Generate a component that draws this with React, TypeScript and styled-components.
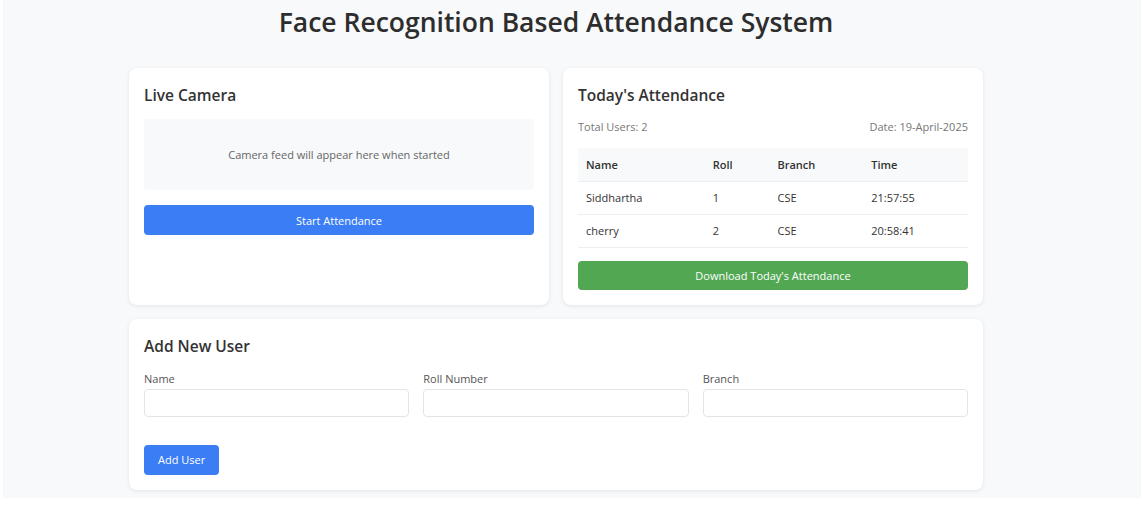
import React from "react";
import styled, { createGlobalStyle } from "styled-components";

const GlobalStyle = createGlobalStyle`
  html, body { margin: 0; padding: 0; background: #ffffff; }
  body { font-family: "Open Sans", "Noto Sans", sans-serif; color: #333; }
  * { box-sizing: border-box; }
`;

const Page = styled.div`
  margin-left: 3px;
  width: 1138px;
  height: 498px;
  background: #f8f9fa;
  overflow: hidden;
`;

const Main = styled.div`
  width: 1106px;
`;

const Title = styled.h1`
  margin: 0 0 24px;
  height: 44px;
  line-height: 44px;
  text-align: center;
  font-size: 26.5px;
  font-weight: 600;
  color: #2d2d2d;
`;

const Container = styled.div`
  width: 854px;
  margin: 0 auto;
  display: flex;
  flex-direction: column;
  gap: 14px;
`;

const Row = styled.div`
  display: grid;
  grid-template-columns: 1fr 1fr;
  gap: 14px;
`;

const Card = styled.section`
  background: #fff;
  border-radius: 8px;
  box-shadow: 0 1px 4px rgba(0, 0, 0, 0.09);
  padding: 15px;
  display: flex;
  flex-direction: column;
`;

const CardTitle = styled.h2<{ $mb: number }>`
  margin: 0 0 ${(p) => p.$mb}px;
  font-size: 15.5px;
  line-height: 24px;
  font-weight: 600;
  color: #333;
`;

const CameraBox = styled.div`
  height: 71px;
  background: #f8f9fa;
  border-radius: 4px;
  display: flex;
  align-items: center;
  justify-content: center;
  font-size: 11px;
  color: #666;
`;

const Button = styled.button<{ $color: string; $mt: number; $h: number; $full?: boolean }>`
  margin-top: ${(p) => p.$mt}px;
  height: ${(p) => p.$h}px;
  width: ${(p) => (p.$full ? "100%" : "auto")};
  align-self: ${(p) => (p.$full ? "stretch" : "flex-start")};
  padding: 0 14px;
  border: none;
  border-radius: 4px;
  background: ${(p) => p.$color};
  color: #fff;
  font-family: inherit;
  font-size: 11px;
`;

const MetaRow = styled.div`
  display: flex;
  justify-content: space-between;
  font-size: 11px;
  line-height: 20px;
  color: #777;
  margin-bottom: 11px;
`;

const Table = styled.table`
  width: 100%;
  border-collapse: collapse;
  font-size: 11px;
  color: #333;
`;

const Th = styled.th<{ $w: number }>`
  width: ${(p) => p.$w}px;
  text-align: left;
  font-weight: 600;
  background: #f8f9fa;
  height: 33px;
  padding: 0 8px;
  border-bottom: 1px solid #eceef0;
`;

const Td = styled.td`
  height: 33px;
  padding: 0 8px;
  border-bottom: 1px solid #eceef0;
`;

const FormGrid = styled.div`
  display: grid;
  grid-template-columns: repeat(3, 1fr);
  gap: 14px;
`;

const Field = styled.div`
  display: flex;
  flex-direction: column;
`;

const Label = styled.label`
  font-size: 11px;
  line-height: 16px;
  color: #555;
  margin-bottom: 2px;
`;

const Input = styled.input`
  height: 28px;
  border: 1px solid #e2e4e7;
  border-radius: 4px;
  background: #fff;
  font-family: inherit;
`;

const rows = [
  { name: "Siddhartha", roll: "1", branch: "CSE", time: "21:57:55" },
  { name: "cherry", roll: "2", branch: "CSE", time: "20:58:41" },
];

export default function App() {
  return (
    <>
      <GlobalStyle />
      <Page>
        <Main>
          <Title>Face Recognition Based Attendance System</Title>
          <Container>
            <Row>
              <Card>
                <CardTitle $mb={12}>Live Camera</CardTitle>
                <CameraBox>Camera feed will appear here when started</CameraBox>
                <Button $color="#3a7df5" $mt={15} $h={30} $full>
                  Start Attendance
                </Button>
              </Card>
              <Card>
                <CardTitle $mb={10}>Today's Attendance</CardTitle>
                <MetaRow>
                  <span>Total Users: 2</span>
                  <span>Date: 19-April-2025</span>
                </MetaRow>
                <Table>
                  <thead>
                    <tr>
                      <Th $w={127}>Name</Th>
                      <Th $w={65}>Roll</Th>
                      <Th $w={94}>Branch</Th>
                      <Th $w={105}>Time</Th>
                    </tr>
                  </thead>
                  <tbody>
                    {rows.map((r) => (
                      <tr key={r.name}>
                        <Td>{r.name}</Td>
                        <Td>{r.roll}</Td>
                        <Td>{r.branch}</Td>
                        <Td>{r.time}</Td>
                      </tr>
                    ))}
                  </tbody>
                </Table>
                <Button $color="#52a753" $mt={13} $h={29} $full>
                  Download Today's Attendance
                </Button>
              </Card>
            </Row>
            <Card>
              <CardTitle $mb={13}>Add New User</CardTitle>
              <FormGrid>
                <Field>
                  <Label>Name</Label>
                  <Input />
                </Field>
                <Field>
                  <Label>Roll Number</Label>
                  <Input />
                </Field>
                <Field>
                  <Label>Branch</Label>
                  <Input />
                </Field>
              </FormGrid>
              <Button $color="#3a7df5" $mt={28} $h={30}>
                Add User
              </Button>
            </Card>
          </Container>
        </Main>
      </Page>
    </>
  );
}
